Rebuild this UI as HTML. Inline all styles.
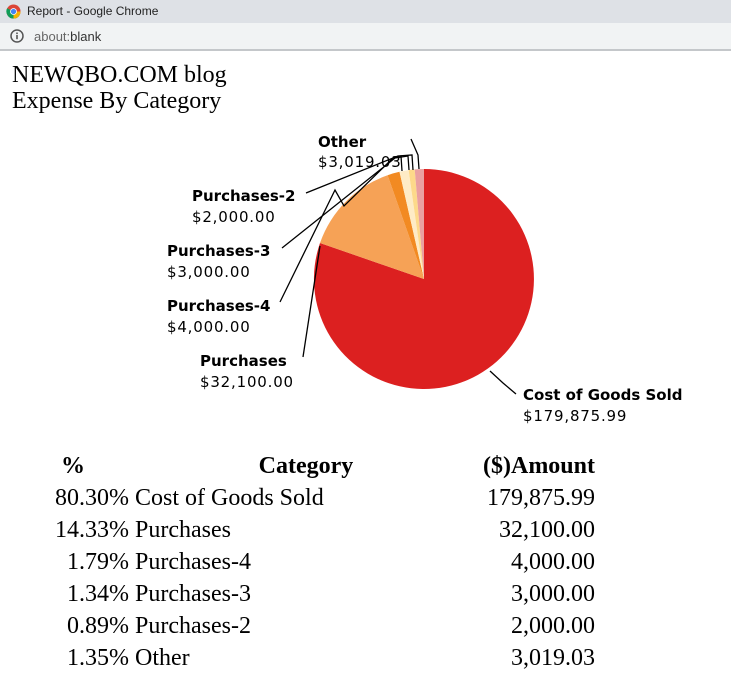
<!DOCTYPE html>
<html><head><meta charset="utf-8"><style>
html,body{margin:0;padding:0;width:731px;height:679px;overflow:hidden;background:#fff}
.tb{position:absolute;left:0;top:0;width:731px;height:23px;background:#dee1e6;font:12px "Liberation Sans",sans-serif;color:#222}
.ab{position:absolute;left:0;top:23px;width:731px;height:26px;background:#f1f3f4;border-bottom:2px solid #c4c7ca;font:13px "Liberation Sans",sans-serif;color:#333}
.t{position:absolute;font-family:"Liberation Serif",serif;font-size:24px;color:#000;white-space:nowrap}
</style></head><body>
<div class="tb">
<svg style="position:absolute;left:6px;top:4px" width="15" height="15" viewBox="0 0 16 16"><circle cx="8" cy="8" r="7.5" fill="#db4437"/><path d="M8 8 L1.5 11.8 A7.5 7.5 0 0 1 1.2 4.5 Z" fill="#0f9d58"/><path d="M8 8 L14.5 11.8 A7.5 7.5 0 0 1 1.5 11.8 Z" fill="#0f9d58"/><path d="M8 8 L15.5 8 A7.5 7.5 0 0 1 14.5 11.8 Z" fill="#f4b400"/><path d="M8 8 L8 15.5 A7.5 7.5 0 0 0 14.5 11.8 Z" fill="#f4b400"/><circle cx="8" cy="8" r="3.6" fill="#fff"/><circle cx="8" cy="8" r="2.8" fill="#4285f4"/></svg>
<span style="position:absolute;left:27px;top:4px">Report - Google Chrome</span></div>
<div class="ab">
<svg style="position:absolute;left:10px;top:6px" width="14" height="14" viewBox="0 0 14 14"><circle cx="7" cy="7" r="6" fill="none" stroke="#555" stroke-width="1.5"/><rect x="6.2" y="6" width="1.6" height="4.2" fill="#555"/><rect x="6.2" y="3.5" width="1.6" height="1.6" fill="#555"/></svg>
<span style="position:absolute;left:34px;top:6px"><span style="color:#666">about:</span>blank</span></div>

<div class="t" style="left:12px;top:62px">NEWQBO.COM blog</div>
<div class="t" style="left:12px;top:88px">Expense By Category</div>

<svg style="position:absolute;left:0;top:0" width="731" height="679">
<g>
<path d="M424 279 L424 169 A110 110 0 1 1 320 243 Z" fill="#dc2020"/>
<path d="M424 279 L320 243 A110 110 0 0 1 387.6 175.2 Z" fill="#f6a256"/>
<path d="M424 279 L387.6 175.2 A110 110 0 0 1 399.5 171.8 Z" fill="#f28a22"/>
<path d="M424 279 L399.5 171.8 A110 110 0 0 1 408.6 170.1 Z" fill="#feebc6"/>
<path d="M424 279 L408.6 170.1 A110 110 0 0 1 414.7 169.4 Z" fill="#fdd98a"/>
<path d="M424 279 L414.7 169.4 A110 110 0 0 1 424 169 Z" fill="#eaa0a0"/>
</g>
<g fill="none" stroke="#000" stroke-width="1.3">
<polyline points="411,139 418,155 419,169"/>
<polyline points="306,193 398,156 412,155 413,170"/>
<polyline points="282,248 395,158 408,156 409,170"/>
<polyline points="280,302 335,190 344,206 394,157 401,156 402,171"/>
<polyline points="303,357 320,246"/>
<polyline points="516,394 503,383 490,371"/>
</g>
<g font-family="DejaVu Sans, sans-serif" font-size="15" fill="#000">
<text x="318" y="147" font-weight="bold">Other</text><text x="318" y="167" letter-spacing="0.8">$3,019.03</text>
<text x="192" y="201" font-weight="bold">Purchases-2</text><text x="192" y="222" letter-spacing="0.8">$2,000.00</text>
<text x="167" y="256" font-weight="bold">Purchases-3</text><text x="167" y="277" letter-spacing="0.8">$3,000.00</text>
<text x="167" y="311" font-weight="bold">Purchases-4</text><text x="167" y="332" letter-spacing="0.8">$4,000.00</text>
<text x="200" y="366" font-weight="bold">Purchases</text><text x="200" y="387" letter-spacing="0.8">$32,100.00</text>
<text x="523" y="400" font-weight="bold">Cost of Goods Sold</text><text x="523" y="421" letter-spacing="0.8">$179,875.99</text>
</g>
<g font-family="Liberation Serif, serif" font-size="24" fill="#000">
<text x="61" y="473" font-weight="bold">%</text>
<text x="306" y="473" font-weight="bold" text-anchor="middle">Category</text>
<text x="595" y="473" font-weight="bold" text-anchor="end">($)Amount</text>
<g text-anchor="end">
<text x="129" y="505">80.30%</text><text x="129" y="537">14.33%</text><text x="129" y="569">1.79%</text><text x="129" y="601">1.34%</text><text x="129" y="633">0.89%</text><text x="129" y="665">1.35%</text>
<text x="595" y="505">179,875.99</text><text x="595" y="537">32,100.00</text><text x="595" y="569">4,000.00</text><text x="595" y="601">3,000.00</text><text x="595" y="633">2,000.00</text><text x="595" y="665">3,019.03</text>
</g>
<text x="135" y="505">Cost of Goods Sold</text><text x="135" y="537">Purchases</text><text x="135" y="569">Purchases-4</text><text x="135" y="601">Purchases-3</text><text x="135" y="633">Purchases-2</text><text x="135" y="665">Other</text>
</g>
</svg>
</body></html>
